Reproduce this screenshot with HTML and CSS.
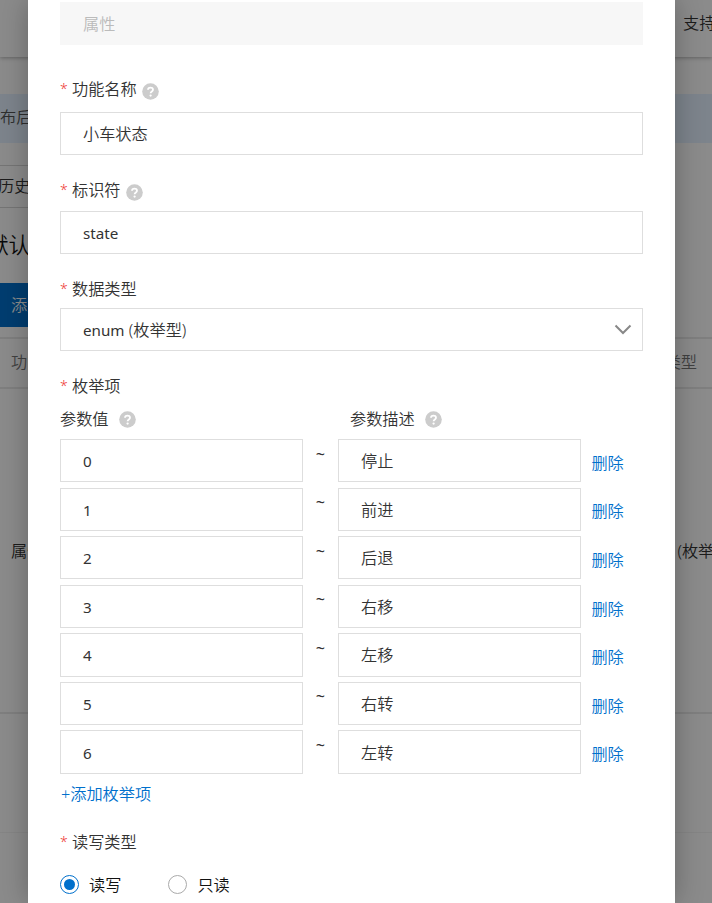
FILE: index.html
```html
<!DOCTYPE html>
<html lang="zh-CN">
<head>
  <meta charset="UTF-8" />
  <meta name="viewport" content="width=device-width, initial-scale=1.0"/>
  <title>编辑功能</title>
  <link rel="stylesheet" href="styles.css">
</head>
<body>
  <svg class="symbols">
    <symbol id="icon-help" viewBox="0 0 17 17">
      <circle cx="8.5" cy="8.5" r="8.3" fill="#ccc"/>
      <path d="M6 6.8C6 3.8 11 3.8 11 6.7C11 8.5 8.6 8.4 8.6 10.3" fill="none" stroke="#fff" stroke-width="1.8"/>
      <circle cx="8.6" cy="12.6" r="1.15" fill="#fff"/>
    </symbol>
  </svg>

  <!-- 底层页面 -->
  <div class="page">
    <header class="page-header"><span>支持</span></header>
    <div class="notice">布后</div>
    <div class="tabs">历史</div>
    <h2 class="page-title">默认</h2>
    <button class="btn-add">添加</button>
    <div class="table-head"><span>功能</span><span class="type-col">类型</span></div>
    <div class="table-row"><span>属性</span><span class="enum-col">(枚举型)</span></div>
    <div class="table-foot"></div>
  </div>

  <div class="mask"></div>

  <!-- 弹窗 -->
  <div class="dialog">
    <div class="input disabled">属性</div>

    <div class="label name-label"><i>*</i>功能名称<svg class="help"><use href="#icon-help"/></svg></div>
    <div class="input">小车状态</div>

    <div class="label id-label"><i>*</i>标识符<svg class="help"><use href="#icon-help"/></svg></div>
    <div class="input latin">state</div>

    <div class="label type-label"><i>*</i>数据类型</div>
    <div class="input select">
      <span><span class="latin">enum</span> (枚举型)</span>
      <svg class="arrow" viewBox="0 0 18 12"><path d="M1.5 1.5L9 9L16.5 1.5" fill="none" stroke="#888" stroke-width="2"/></svg>
    </div>

    <div class="label enum-label"><i>*</i>枚举项</div>
    <div class="enum-head">
      <div class="head-value">参数值<svg class="help"><use href="#icon-help"/></svg></div>
      <div>参数描述<svg class="help"><use href="#icon-help"/></svg></div>
    </div>
    <div class="enum-list">
      <div class="enum-row"><div class="input latin">0</div><span class="tilde">~</span><div class="input">停止</div><a class="link">删除</a></div>
      <div class="enum-row"><div class="input latin">1</div><span class="tilde">~</span><div class="input">前进</div><a class="link">删除</a></div>
      <div class="enum-row"><div class="input latin">2</div><span class="tilde">~</span><div class="input">后退</div><a class="link">删除</a></div>
      <div class="enum-row"><div class="input latin">3</div><span class="tilde">~</span><div class="input">右移</div><a class="link">删除</a></div>
      <div class="enum-row"><div class="input latin">4</div><span class="tilde">~</span><div class="input">左移</div><a class="link">删除</a></div>
      <div class="enum-row"><div class="input latin">5</div><span class="tilde">~</span><div class="input">右转</div><a class="link">删除</a></div>
      <div class="enum-row"><div class="input latin">6</div><span class="tilde">~</span><div class="input">左转</div><a class="link">删除</a></div>
    </div>
    <a class="link add-item">+添加枚举项</a>

    <div class="label rw-label"><i>*</i>读写类型</div>
    <div class="radio-group">
      <label class="radio checked"><span class="dot"></span>读写</label>
      <label class="radio"><span class="dot"></span>只读</label>
    </div>
  </div>
</body>
</html>
```
FILE: styles.css
```css
:root {
  --primary: #0070cc;
  --border: #dedede;
  --text: #333;
}

* {
  box-sizing: border-box;
}

body {
  position: relative;
  width: 712px;
  height: 903px;
  margin: 0;
  overflow: hidden;
  font-family: "Noto Sans", "Noto Sans CJK SC", sans-serif;
  font-size: 16.2px;
  font-weight: 350;
  line-height: 24px;
  color: var(--text);
}

.symbols {
  display: none;
}

/* 底层页面 */
.page {
  height: 903px;
  overflow: hidden;
  background: #fdfdfd;
  white-space: nowrap;
}

.page-header {
  display: flex;
  height: 57px;
  padding: 11px 0 0 683px;
  box-shadow: 0 1px 4px rgba(0,0,0,0.3);
}

.notice {
  height: 49px;
  margin-top: 37px;
  padding-top: 11px;
  background: #e3f1ff;
  color: #555;
}

.tabs {
  width: 300px;
  height: 43px;
  margin-top: 22px;
  padding-top: 8px;
  border: solid #d5d5d5;
  border-width: 1px 0;
  text-indent: -2px;
}

.page-title {
  height: 75px;
  margin: 0;
  padding-top: 21px;
  font-size: 21.6px;
  font-weight: 350;
  line-height: 32px;
  text-indent: -13px;
  color: #111;
}

.btn-add {
  display: block;
  width: 120px;
  height: 44px;
  padding: 0 0 0 11px;
  border: 0;
  background: #0070cc;
  color: #fff;
  font: inherit;
  text-align: left;
}

.table-head {
  display: flex;
  justify-content: space-between;
  height: 52px;
  margin-top: 10px;
  padding: 11px 15px 0 11px;
  border: solid #e8e8e8;
  border-width: 2px 0;
  color: #777;
}

.table-row {
  display: flex;
  align-items: center;
  height: 325px;
  padding-left: 11px;
  border-bottom: 2px solid #e8e8e8;
}

.enum-col {
  margin-left: 634px;
}

.table-foot {
  height: 119px;
  border-bottom: 1px solid #f3f3f3;
}

.mask {
  position: absolute;
  inset: 0;
  background: rgba(0,0,0,0.45);
}

/* 弹窗 */
.dialog {
  position: absolute;
  top: 0;
  left: 28px;
  width: 647px;
  height: 903px;
  padding: 2px 32px 0;
  background: #fff;
  box-shadow: 0 0 27px rgba(0,0,0,0.28);
}

.input {
  display: flex;
  align-items: center;
  height: 43px;
  padding: 0 22px;
  border: 1px solid var(--border);
  background: #fff;
}

.input.disabled {
  border-color: #f7f7f7;
  background: #f7f7f7;
  color: #bbb;
}

.latin {
  font-size: 15.2px;
  font-weight: 400;
}

.select {
  justify-content: space-between;
  padding-right: 10px;
}

.arrow {
  width: 18px;
  height: 12px;
}

.label {
  display: flex;
  align-items: center;
}

.label i {
  width: 12px;
  font-size: 14px;
  font-style: normal;
  color: #e33;
}

.help {
  flex: none;
  width: 17px;
  height: 17px;
  margin: 4px 0 0 5px;
}

.name-label {
  margin: 32px 0 11px;
}

.id-label {
  margin: 23px 0 9px;
}

.type-label {
  margin: 23px 0 7px;
}

.enum-label {
  margin: 23px 0 9px;
}

.enum-head {
  display: flex;
  margin-bottom: 8px;
}

.enum-head div {
  display: flex;
  align-items: center;
}

.enum-head .head-value {
  width: 290px;
}

.enum-head .help {
  margin: 1px 0 0 10px;
}

.enum-row {
  display: flex;
  height: 43.2px;
  margin-bottom: 5.4px;
}

.enum-row .input {
  width: 243px;
  height: 43.2px;
  padding-top: 1px;
}

.tilde {
  width: 35px;
  padding-top: 2.6px;
  font-weight: 400;
  text-align: center;
}

.link {
  color: var(--primary);
}

.enum-row .link {
  margin-left: 10.4px;
  padding-top: 11.8px;
}

.add-item {
  display: block;
  margin-top: 8px;
  padding-left: 1px;
}

.rw-label {
  margin: 24px 0 19px;
}

.radio-group {
  display: flex;
  gap: 47px;
}

.radio {
  display: flex;
  align-items: center;
  gap: 10px;
  color: #111;
}

.dot {
  width: 19px;
  height: 19px;
  border: 1px solid #aaa;
  border-radius: 50%;
}

.checked .dot {
  padding: 3px;
  border-color: var(--primary);
  background: var(--primary) content-box;
}
```
